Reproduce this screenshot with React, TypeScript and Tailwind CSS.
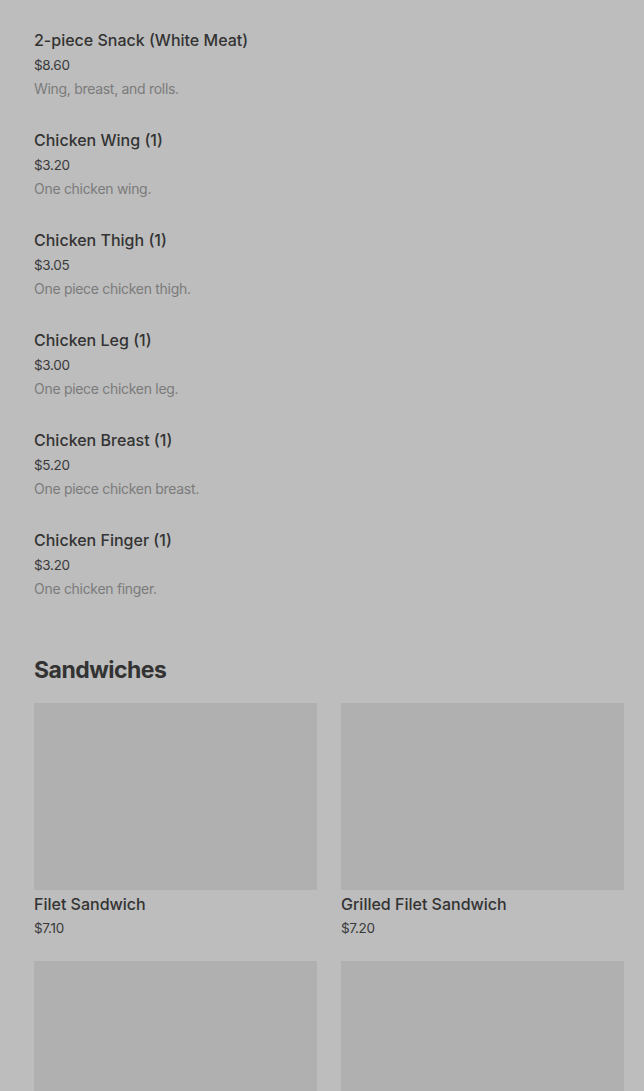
import React from "react";

const items = [
  { name: "2-piece Snack (White Meat)", price: "$8.60", desc: "Wing, breast, and rolls." },
  { name: "Chicken Wing (1)", price: "$3.20", desc: "One chicken wing." },
  { name: "Chicken Thigh (1)", price: "$3.05", desc: "One piece chicken thigh." },
  { name: "Chicken Leg (1)", price: "$3.00", desc: "One piece chicken leg." },
  { name: "Chicken Breast (1)", price: "$5.20", desc: "One piece chicken breast." },
  { name: "Chicken Finger (1)", price: "$3.20", desc: "One chicken finger." },
];

const sandwiches = [
  { name: "Filet Sandwich", price: "$7.10" },
  { name: "Grilled Filet Sandwich", price: "$7.20" },
  { name: "", price: "" },
  { name: "", price: "" },
];

export default function App() {
  return (
    <div
      className="w-[644px] h-[1091px] overflow-hidden bg-[#bdbdbd] pl-[34px] pr-[20px] pt-[29px]"
      style={{ fontFamily: "Inter, 'Noto Sans', sans-serif" }}
    >
      <div className="flex flex-col gap-[30px]">
        {items.map((it) => (
          <div key={it.name} className="flex flex-col">
            <div className="text-[16px] leading-[22px] font-medium text-[#333333]">{it.name}</div>
            <div className="mt-[4px] text-[13.5px] leading-[20px] text-[#3a3a3a] tracking-[-0.3px]">{it.price}</div>
            <div className="mt-[4px] text-[14px] leading-[20px] text-[#7b7b7b] tracking-[-0.3px]">{it.desc}</div>
          </div>
        ))}
      </div>
      <h2 className="mt-[55px] text-[23px] leading-[32px] font-bold text-[#333333] tracking-[-0.5px]">Sandwiches</h2>
      <div className="mt-[17px] grid grid-cols-2 gap-x-[24px] gap-y-[24px]">
        {sandwiches.map((s, i) => (
          <div key={i} className="flex flex-col">
            <div className="h-[187px] bg-[#b0b0b0]" />
            <div className="mt-[3px] text-[16px] leading-[22px] font-medium text-[#333333]">{s.name}</div>
            <div className="mt-[4px] text-[13.5px] leading-[18px] text-[#3a3a3a] tracking-[-0.3px]">{s.price}</div>
          </div>
        ))}
      </div>
    </div>
  );
}
